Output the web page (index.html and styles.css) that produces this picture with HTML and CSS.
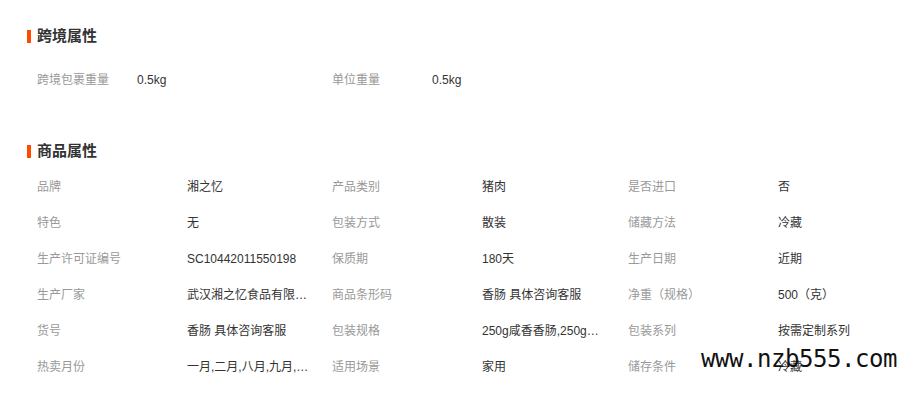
FILE: index.html
```html
<!DOCTYPE html>
<html lang="zh-CN">
<head>
<meta charset="utf-8">
<title>商品属性</title>
<link rel="stylesheet" href="styles.css">
</head>
<body>
<div class="page">
  <h2 class="heading heading-first"><span class="bar"></span>跨境属性</h2>
  <div class="grid grid-cross">
    <div class="lbl">跨境包裹重量</div><div class="val">0.5kg</div>
    <div class="lbl">单位重量</div><div class="val">0.5kg</div>
  </div>

  <h2 class="heading heading-second"><span class="bar"></span>商品属性</h2>
  <div class="grid grid-goods">
    <div class="lbl">品牌</div><div class="val">湘之忆</div>
    <div class="lbl">产品类别</div><div class="val">猪肉</div>
    <div class="lbl">是否进口</div><div class="val">否</div>

    <div class="lbl">特色</div><div class="val">无</div>
    <div class="lbl">包装方式</div><div class="val">散装</div>
    <div class="lbl">储藏方法</div><div class="val">冷藏</div>

    <div class="lbl">生产许可证编号</div><div class="val">SC10442011550198</div>
    <div class="lbl">保质期</div><div class="val">180天</div>
    <div class="lbl">生产日期</div><div class="val">近期</div>

    <div class="lbl">生产厂家</div><div class="val">武汉湘之忆食品有限公司</div>
    <div class="lbl">商品条形码</div><div class="val">香肠 具体咨询客服</div>
    <div class="lbl">净重（规格）</div><div class="val">500（克）</div>

    <div class="lbl">货号</div><div class="val">香肠 具体咨询客服</div>
    <div class="lbl">包装规格</div><div class="val">250g咸香香肠,250g甜味香肠</div>
    <div class="lbl">包装系列</div><div class="val">按需定制系列</div>

    <div class="lbl">热卖月份</div><div class="val">一月,二月,八月,九月,十月,十一月,十二月</div>
    <div class="lbl">适用场景</div><div class="val">家用</div>
    <div class="lbl">储存条件</div><div class="val">冷藏</div>
  </div>
</div>
<div class="watermark">www.nzb555.com</div>
</body>
</html>
```
FILE: styles.css
```css
html, body {
  margin: 0;
  padding: 0;
  background: #fff;
}
body {
  font-family: "Liberation Sans", "Noto Sans CJK SC", sans-serif;
  font-size: 12px;
  color: #333;
  position: relative;
  width: 907px;
  height: 393px;
  overflow: hidden;
}
.page {
  padding-left: 27px;
}
.heading {
  display: flex;
  align-items: center;
  height: 20px;
  margin: 0;
  font-size: 15px;
  font-weight: bold;
  color: #333;
  line-height: 20px;
}
.heading-first {
  padding-top: 26px;
}
.heading-second {
  margin-top: 43px;
}
.bar {
  display: block;
  width: 4px;
  height: 13px;
  background: #ff4a00;
  margin-right: 6px;
}
.grid {
  display: grid;
  padding-left: 10px;
  grid-auto-rows: 36px;
  line-height: 36px;
}
.grid-cross {
  margin-top: 16px;
  grid-template-columns: 100px 195px 100px 195px;
}
.grid-goods {
  margin-top: 8px;
  grid-template-columns: 150px 145px 150px 146px 150px 124px;
}
.lbl {
  color: #999;
  white-space: nowrap;
}
.val {
  color: #333;
  max-width: 123px;
  white-space: nowrap;
  overflow: hidden;
  text-overflow: ellipsis;
}
.watermark {
  position: absolute;
  left: 701px;
  top: 347px;
  font-family: "DejaVu Sans Mono", monospace;
  font-size: 24px;
  letter-spacing: -0.45px;
  line-height: 24px;
  color: #111;
  white-space: nowrap;
}
```
